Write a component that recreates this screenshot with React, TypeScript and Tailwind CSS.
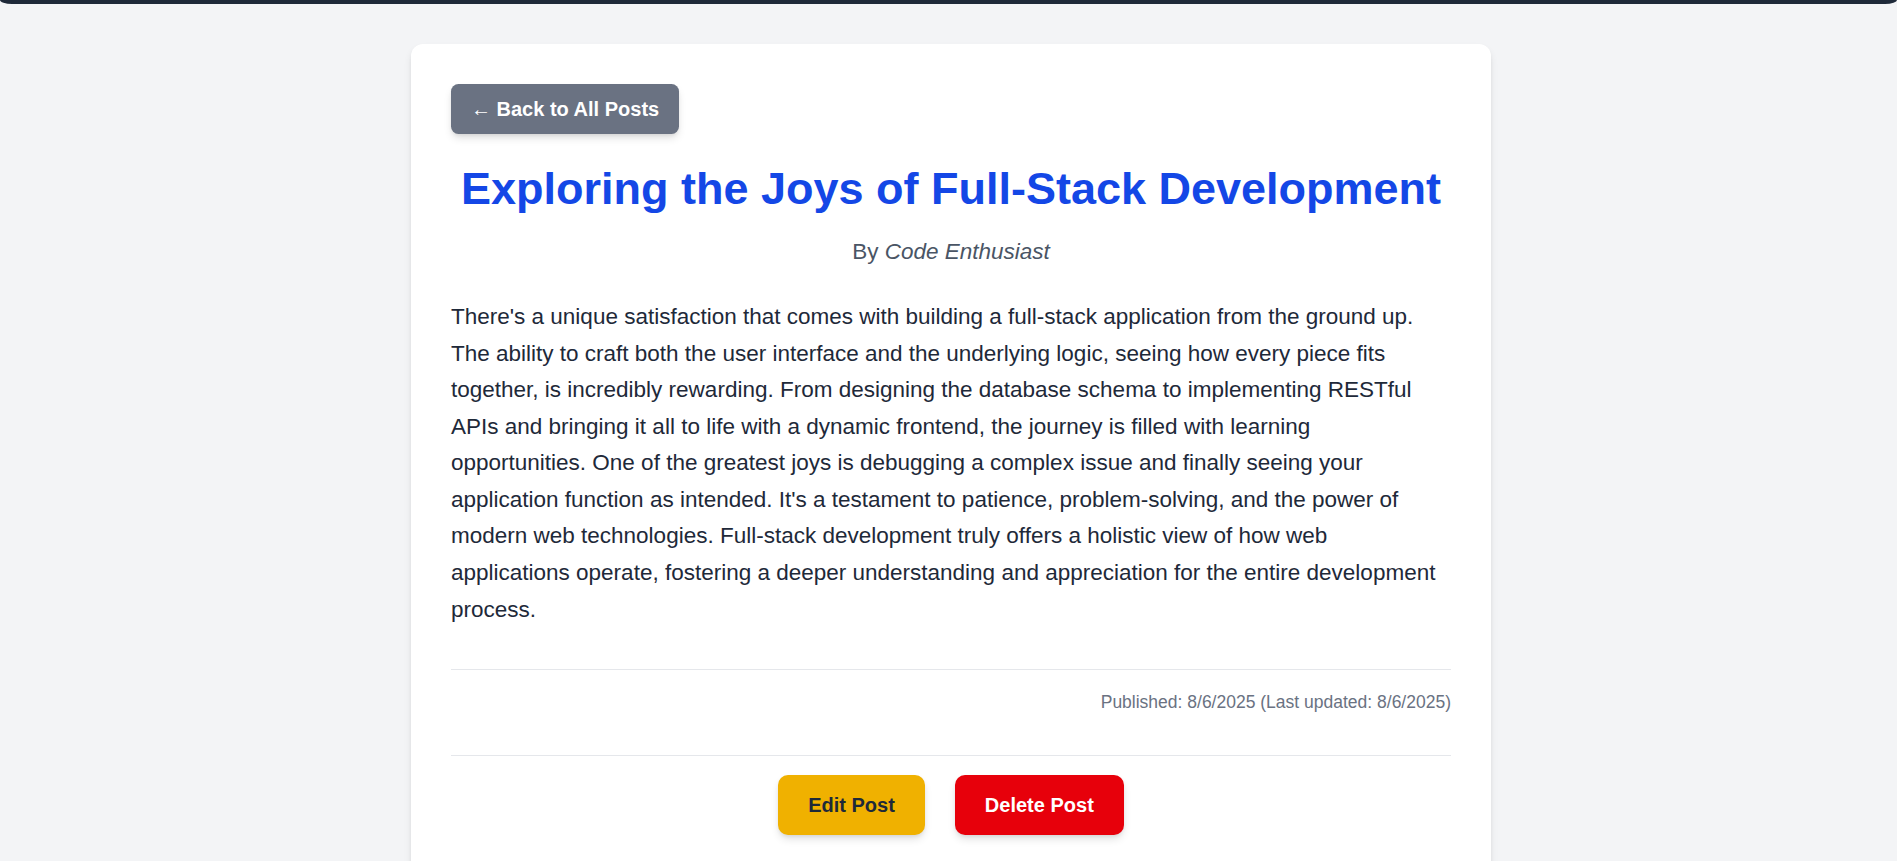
import React from "react";

const post = {
  title: "Exploring the Joys of Full-Stack Development",
  author: "Code Enthusiast",
  body:
    "There's a unique satisfaction that comes with building a full-stack application from the ground up. The ability to craft both the user interface and the underlying logic, seeing how every piece fits together, is incredibly rewarding. From designing the database schema to implementing RESTful APIs and bringing it all to life with a dynamic frontend, the journey is filled with learning opportunities. One of the greatest joys is debugging a complex issue and finally seeing your application function as intended. It's a testament to patience, problem-solving, and the power of modern web technologies. Full-stack development truly offers a holistic view of how web applications operate, fostering a deeper understanding and appreciation for the entire development process.",
  published: "8/6/2025",
  updated: "8/6/2025",
};

export default function App() {
  return (
    <div className="min-h-screen bg-[#f3f4f6] font-['Liberation_Sans',Arial,sans-serif]">
      {/* navbar, scrolled mostly out of view */}
      <nav className="h-[4px] rounded-bl-[12px_4px] rounded-br-[12px_4px] bg-[#1e2939] shadow-[0_12px_18px_-4px_rgba(0,0,0,0.12),0_5px_8px_-5px_rgba(0,0,0,0.12)]" />

      <main className="mx-auto mt-[40px] max-w-[1125px] pl-[25px] pr-[20px] pb-[40px]">
        <article className="rounded-[12px] bg-white p-[40px] shadow-[0_5px_8px_-1px_rgba(0,0,0,0.1),0_2px_5px_-2px_rgba(0,0,0,0.1)]">
          <button
            type="button"
            className="mb-[30px] rounded-[7.5px] bg-[#6a7282] px-[20px] py-[10px] text-[20px] leading-[30px] font-bold text-white shadow-[0_5px_8px_-1px_rgba(0,0,0,0.12),0_2px_5px_-2px_rgba(0,0,0,0.12)]"
          >
            ← Back to All Posts
          </button>

          <h1 className="mb-[20px] text-center text-[45px] leading-[50px] font-bold text-[#1447e6]">
            {post.title}
          </h1>
          <p className="mb-[30px] text-center text-[22.5px] leading-[35px] text-[#4a5565]">
            By <em>{post.author}</em>
          </p>

          <p className="text-[22.5px] leading-[36.5625px] text-[#1e2939]">{post.body}</p>

          <div className="mt-[41px] border-t border-[#e5e7eb] pt-[20px] text-right text-[17.5px] leading-[25px] text-[#6a7282]">
            Published: {post.published} (Last updated: {post.updated})
          </div>

          <div className="mt-[40px] flex justify-center gap-[30px] border-t border-[#e5e7eb] pt-[19px]">
            <button
              type="button"
              className="rounded-[10px] bg-[#f0b100] px-[30px] py-[15px] text-[20px] leading-[30px] font-bold text-[#1e2939] shadow-[0_5px_8px_-1px_rgba(0,0,0,0.12),0_2px_5px_-2px_rgba(0,0,0,0.12)]"
            >
              Edit Post
            </button>
            <button
              type="button"
              className="rounded-[10px] bg-[#e7000b] px-[30px] py-[15px] text-[20px] leading-[30px] font-bold text-white shadow-[0_5px_8px_-1px_rgba(0,0,0,0.12),0_2px_5px_-2px_rgba(0,0,0,0.12)]"
            >
              Delete Post
            </button>
          </div>
        </article>
      </main>
    </div>
  );
}
